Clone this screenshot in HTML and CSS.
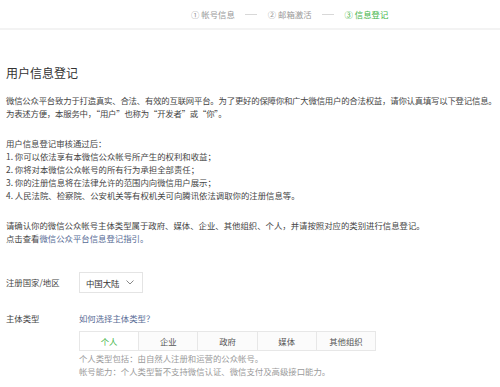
FILE: index.html
```html
<!DOCTYPE html>
<html lang="zh-CN">
<head>
	<meta charset="UTF-8">
	<title>用户信息登记</title>
	<link rel="stylesheet" href="styles.css">
</head>
<body>
	<div class="top">
		<div class="steps">
			<span class="step">① 帐号信息</span>
			<span class="line"></span>
			<span class="step">② 邮箱激活</span>
			<span class="line"></span>
			<span class="step cur">③ 信息登记</span>
		</div>
	</div>
	<div class="main">
		<h2>用户信息登记</h2>
		<p class="intro">微信公众平台致力于打造真实、合法、有效的互联网平台。为了更好的保障你和广大微信用户的合法权益，请你认真填写以下登记信息。<br>为表述方便，本服务中，“用户”也称为“开发者”或“你”。</p>
		<p>用户信息登记审核通过后：<br>1. 你可以依法享有本微信公众帐号所产生的权利和收益；<br>2. 你将对本微信公众帐号的所有行为承担全部责任；<br>3. 你的注册信息将在法律允许的范围内向微信用户展示；<br>4. 人民法院、检察院、公安机关等有权机关可向腾讯依法调取你的注册信息等。</p>
		<p>请确认你的微信公众帐号主体类型属于政府、媒体、企业、其他组织、个人，并请按照对应的类别进行信息登记。<br>点击查看<a href="javascript:;">微信公众平台信息登记指引。</a></p>
		<div class="form_item area">
			<label>注册国家/地区</label>
			<div class="select">中国大陆
				<svg width="8" height="5" viewBox="0 0 8 5"><path d="M0.5 0.5 L4 4 L7.5 0.5" fill="none" stroke="#888" stroke-width="1"/></svg>
			</div>
		</div>
		<div class="form_item type">
			<label>主体类型</label>
			<div class="ctrl">
				<a href="javascript:;">如何选择主体类型？</a>
				<div class="tabs">
					<span class="cur">个人</span>
					<span>企业</span>
					<span>政府</span>
					<span>媒体</span>
					<span>其他组织</span>
				</div>
				<div class="tips">个人类型包括：由自然人注册和运营的公众帐号。<br>帐号能力：个人类型暂不支持微信认证、微信支付及高级接口能力。</div>
			</div>
		</div>
	</div>
</body>
</html>
```
FILE: styles.css
```css
body,div,p,h2,span,label{margin:0;padding:0}
body{font-family:"Noto Sans CJK SC","Liberation Sans",sans-serif;color:#353535;background:#fff;font-size:8.4px}
a{text-decoration:none;color:#576b95}
.top{height:28px;border-bottom:2px solid #f3f3f3;display:flex;align-items:center}
.steps{margin-left:191px;display:flex;align-items:center;color:#999;font-size:8.4px}
.step.cur{color:#44b549}
.line{width:12px;height:1px;background:#d8d8d8;margin:0 10.5px}
.main{padding-left:6px}
h2{font-size:12px;font-weight:normal;line-height:16px;margin-top:35px;color:#333}
.main p{line-height:13px;margin-top:13px;color:#454545;white-space:nowrap}
.main p + p{margin-top:17px}
.main p.intro{letter-spacing:-0.2px}
.form_item{display:flex}
.form_item label{width:73px;flex:none;color:#454545;line-height:13px}
.area{margin-top:27px;align-items:center}
.select{display:flex;align-items:center;justify-content:space-between;box-sizing:border-box;width:64px;height:21px;padding:0 8px 0 6px;border:1px solid #e4e4e4;color:#333}
.type{margin-top:19px}
.ctrl a{display:block;line-height:13px}
.tabs{display:flex;width:297px;height:20px;border:1px solid #e7e7e7;box-sizing:border-box;margin-top:6px;background:#fbfbfb}
.tabs span{flex:1;text-align:center;line-height:18px;color:#555;border-left:1px solid #e7e7e7}
.tabs span:first-child{border-left:0}
.tabs span.cur{color:#44b549;background:#fff}
.tips{color:#9a9a9a;line-height:13px;margin-top:1px}
```
